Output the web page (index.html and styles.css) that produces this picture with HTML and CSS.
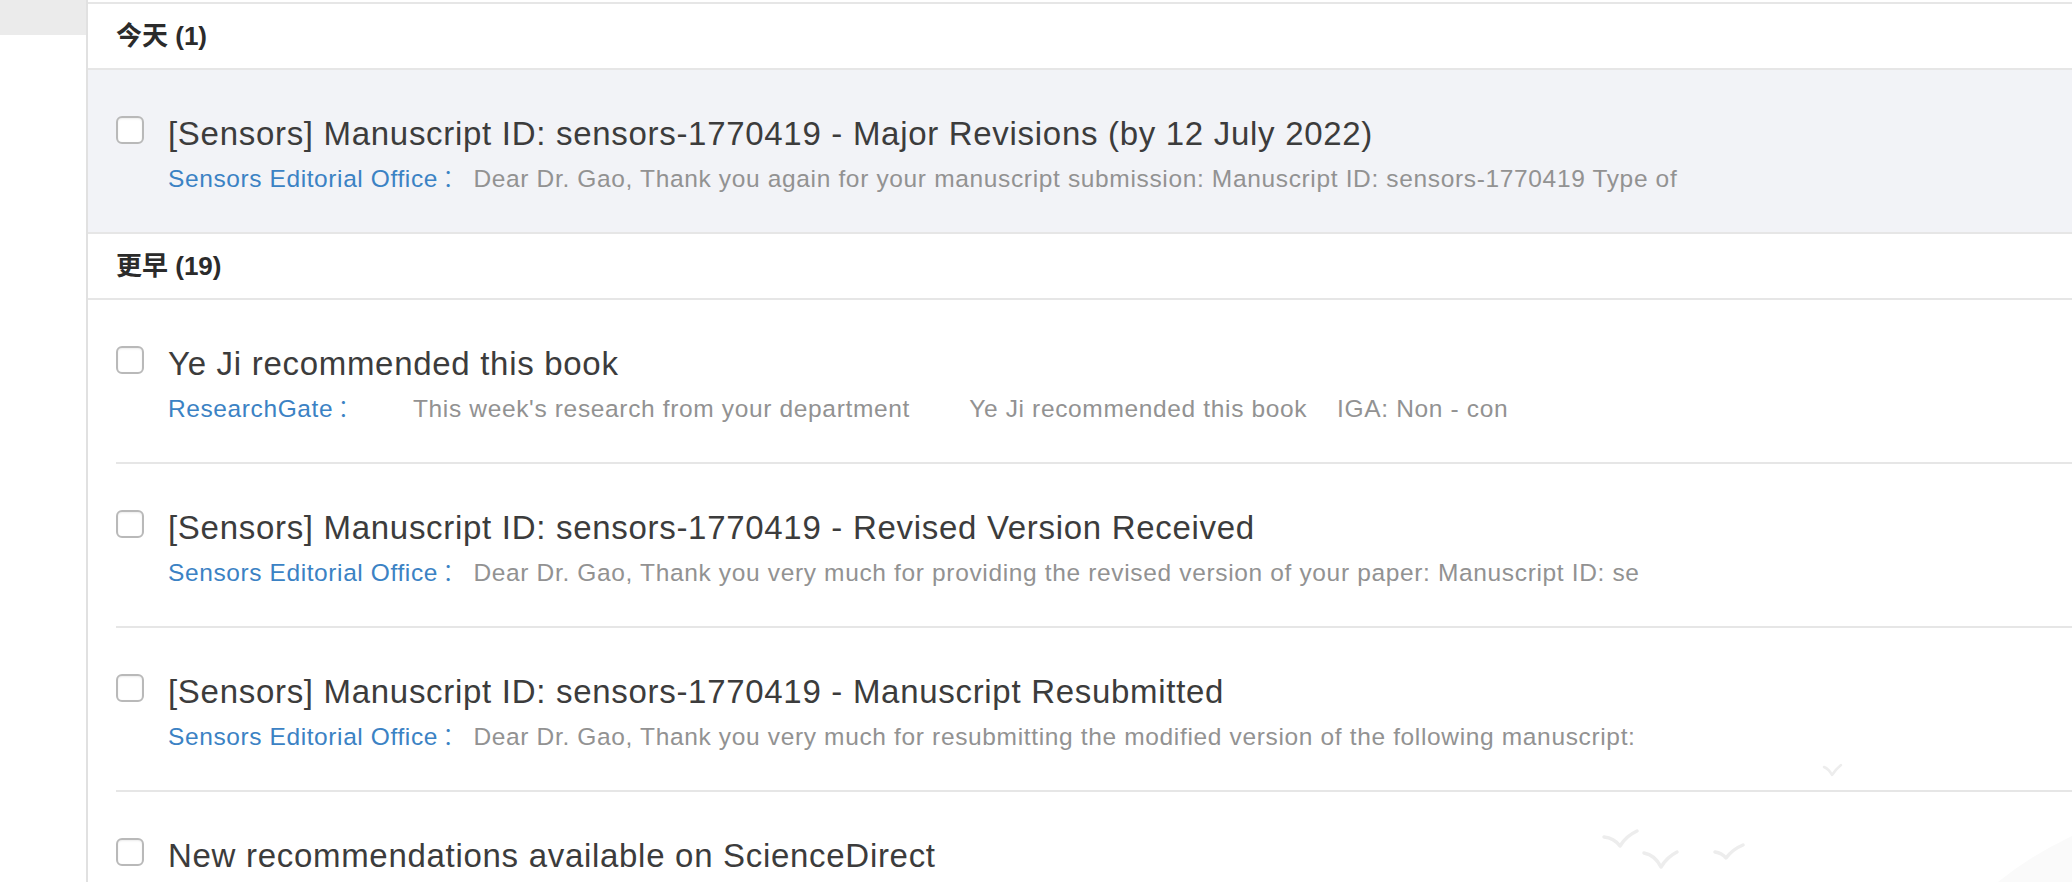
FILE: index.html
```html
<!DOCTYPE html>
<html lang="zh-CN">
<head>
<meta charset="utf-8">
<title>邮件列表</title>
<link rel="stylesheet" href="styles.css">
</head>
<body>
<div class="page">
  <aside class="sidebar"><div class="side-tab"></div></aside>
  <main class="panel">
    <section class="group">
      <h3 class="group-head">今天 (1)</h3>
      <ul class="mail-list">
        <li class="mail active">
          <span class="check"></span>
          <div class="mail-body">
            <div class="subject">[Sensors] Manuscript ID: sensors-1770419 - Major Revisions (by 12 July 2022)</div>
            <div class="meta"><span class="sender">Sensors Editorial Office</span><span class="colon">：</span><span class="preview">Dear Dr. Gao, Thank you again for your manuscript submission: Manuscript ID: sensors-1770419 Type of</span></div>
          </div>
        </li>
      </ul>
    </section>
    <section class="group">
      <h3 class="group-head">更早 (19)</h3>
      <ul class="mail-list">
        <li class="mail">
          <span class="check"></span>
          <div class="mail-body">
            <div class="subject">Ye Ji recommended this book</div>
            <div class="meta"><span class="sender">ResearchGate</span><span class="colon">：</span><span class="preview">      This week's research from your department        Ye Ji recommended this book    IGA: Non - con</span></div>
          </div>
        </li>
        <li class="mail">
          <span class="check"></span>
          <div class="mail-body">
            <div class="subject">[Sensors] Manuscript ID: sensors-1770419 - Revised Version Received</div>
            <div class="meta"><span class="sender">Sensors Editorial Office</span><span class="colon">：</span><span class="preview">Dear Dr. Gao, Thank you very much for providing the revised version of your paper: Manuscript ID: se</span></div>
          </div>
        </li>
        <li class="mail">
          <span class="check"></span>
          <div class="mail-body">
            <div class="subject">[Sensors] Manuscript ID: sensors-1770419 - Manuscript Resubmitted</div>
            <div class="meta"><span class="sender">Sensors Editorial Office</span><span class="colon">：</span><span class="preview">Dear Dr. Gao, Thank you very much for resubmitting the modified version of the following manuscript:</span></div>
          </div>
        </li>
        <li class="mail">
          <span class="check"></span>
          <div class="mail-body">
            <div class="subject">New recommendations available on ScienceDirect</div>
          </div>
        </li>
      </ul>
    </section>
  </main>
  <svg class="decor" viewBox="1500 700 572 182" aria-hidden="true">
    <path class="glow" d="M2072 836 Q2030 856 1998 882 L2072 882 Z"/>
    <path class="bird small" d="M1824 767 Q1829 769 1832 775 Q1836 769 1841 765"/>
    <path class="bird" d="M1604 837 Q1614 838 1620 846 Q1626 836 1637 831"/>
    <path class="bird" d="M1644 853 Q1655 855 1661 867 Q1667 857 1677 852"/>
    <path class="bird" d="M1715 852 Q1722 853 1726 858 Q1733 849 1743 845"/>
  </svg>
</div>
</body>
</html>
```

FILE: styles.css
```css
html, body {
  margin: 0;
  padding: 0;
  background: #ffffff;
}

body {
  font-family: "Liberation Sans", Arial, "Noto Sans CJK SC", sans-serif;
}

.page {
  position: relative;
  display: flex;
  height: 882px;
  overflow: hidden;
}

.sidebar {
  flex: none;
  width: 86px;
  border-right: 2px solid #e1e1e1;
}

.side-tab {
  height: 35px;
  background: #ebebeb;
}

.panel {
  flex: 1;
  margin-top: 2px;
  border-top: 2px solid #e6e6e6;
}

.group-head {
  margin: 0;
  height: 66px;
  box-sizing: border-box;
  display: flex;
  align-items: center;
  padding: 0 0 5px 28px;
  font-family: "Liberation Sans", "Noto Sans CJK SC", sans-serif;
  font-size: 26px;
  font-weight: 700;
  color: #2b2b2b;
  border-bottom: 2px solid #e6e6e6;
}

.mail-list {
  list-style: none;
  margin: 0;
  padding: 0;
}

.mail {
  display: flex;
  align-items: flex-start;
  height: 162px;
  margin-left: 28px;
  border-bottom: 2px solid #e6e6e6;
}

.mail.active {
  margin-left: 0;
  padding-left: 28px;
  background: #f2f3f7;
}

.check {
  flex: none;
  width: 24px;
  height: 24px;
  margin-top: 46px;
  border: 2px solid #b9b9b9;
  border-radius: 6px;
  background: #ffffff;
  box-shadow: inset 0 1px 2px rgba(0, 0, 0, 0.08);
}

.mail-body {
  margin-left: 24px;
  padding-top: 44px;
  min-width: 0;
}

.subject {
  font-size: 33px;
  line-height: 40px;
  color: #3c3c3c;
  letter-spacing: 0.7px;
  white-space: nowrap;
}

.meta {
  margin-top: 8px;
  font-size: 24.5px;
  line-height: 30px;
  letter-spacing: 0.6px;
  white-space: pre;
}

.sender {
  color: #3b82c4;
}

.colon {
  font-family: "Noto Sans CJK TC", sans-serif;
  font-weight: 300;
  color: #3b82c4;
  letter-spacing: 0;
  margin-left: 4px;
  margin-right: 7px;
}

.preview {
  color: #929292;
  letter-spacing: 0.65px;
}

.decor {
  position: absolute;
  right: 0;
  bottom: 0;
  width: 572px;
  height: 182px;
  pointer-events: none;
}

.decor .bird {
  fill: none;
  stroke: #ededed;
  stroke-width: 3.5;
  stroke-linecap: round;
  stroke-linejoin: round;
}

.decor .bird.small {
  stroke-width: 2.5;
}

.decor .glow {
  fill: #fafafa;
}
```
